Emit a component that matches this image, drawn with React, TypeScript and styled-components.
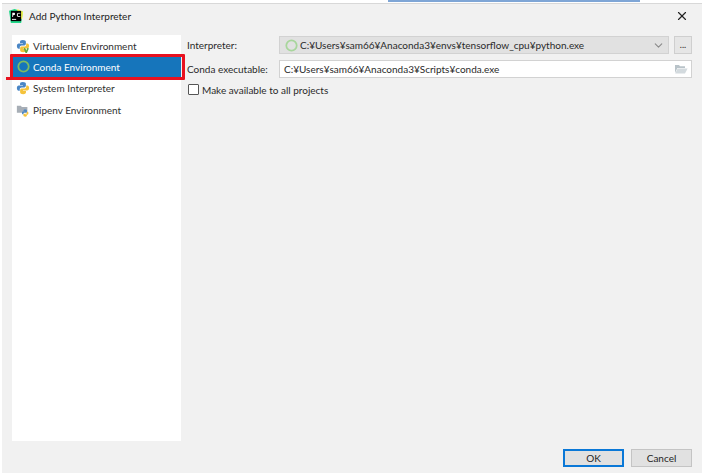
import styled, { createGlobalStyle } from "styled-components";
import { LuChevronDown, LuX } from "react-icons/lu";

const GlobalStyle = createGlobalStyle`
  html, body {
    margin: 0;
    padding: 0;
    background: #fff;
  }
  body {
    font-family: Lato, "Noto Sans", sans-serif;
    font-size: 10px;
    color: #2a2a2a;
  }
`;

const Page = styled.div`
  width: 702px;
  height: 475px;
  box-sizing: border-box;
  padding: 3px 0 2px 2px;
  overflow: hidden;
  position: relative;
`;

const TopEdge = styled.div`
  position: absolute;
  top: 0;
  left: 388px;
  width: 252px;
  height: 2px;
  background: #7fa6d6;
`;

const Dialog = styled.div`
  height: 100%;
  box-sizing: border-box;
  background: #f1f1f1;
  border-top: 1px solid #d8d8d8;
  display: flex;
  flex-direction: column;
`;

const TitleBar = styled.div`
  height: 23px;
  flex: none;
  display: flex;
  align-items: center;
  padding: 0 13px 0 7px;
  gap: 6px;
  color: #222;
`;

const Title = styled.span`
  flex: 1;
`;

const Close = styled.span`
  display: flex;
  color: #222;
  font-size: 14px;
`;

const Body = styled.div`
  flex: none;
  display: flex;
  margin-top: 8px;
  padding: 0 10px;
  gap: 6px;
`;

const Sidebar = styled.div`
  width: 169px;
  height: 406px;
  flex: none;
  background: #fff;
  box-sizing: border-box;
  display: flex;
  flex-direction: column;
`;

const NavRow = styled.div<{ $active?: boolean }>`
  height: 21.3px;
  display: flex;
  align-items: center;
  gap: 3px;
  padding-left: 4px;
  position: relative;
  background: ${(p) => (p.$active ? "#1675bb" : "transparent")};
  color: ${(p) => (p.$active ? "#fff" : "#2f2f2f")};
`;

const Highlight = styled.div`
  position: absolute;
  left: -2px;
  right: -4px;
  top: -2px;
  bottom: -2px;
  border: 3px solid #e8111f;
  border-radius: 1px;
`;

const HighlightTail = styled.div`
  position: absolute;
  left: -6px;
  bottom: -2px;
  width: 8px;
  height: 3px;
  background: #e8111f;
`;

const Form = styled.div`
  flex: 1;
  min-width: 0;
  padding-top: 1px;
  display: flex;
  flex-direction: column;
  gap: 6px;
`;

const FormRow = styled.div`
  display: flex;
  align-items: center;
  height: 18px;
  gap: 5px;
`;

const Label = styled.label`
  width: 87px;
  flex: none;
  white-space: nowrap;
`;

const Field = styled.div<{ $combo?: boolean }>`
  flex: 1;
  min-width: 0;
  height: 18px;
  box-sizing: border-box;
  display: flex;
  align-items: center;
  gap: ${(p) => (p.$combo ? "2px" : "3px")};
  padding: 0 3px 0 4px;
  background: ${(p) => (p.$combo ? "#e1e1e1" : "#fff")};
  border: 1px solid #d2d2d2;
  white-space: nowrap;
`;

const FieldText = styled.span`
  flex: 1;
`;

const Chevron = styled.span`
  display: flex;
  color: #8a8a8a;
  font-size: 13px;
`;

const Browse = styled.div`
  width: 18px;
  height: 18px;
  flex: none;
  box-sizing: border-box;
  background: #e6e6e6;
  border: 1px solid #cfcfcf;
  display: flex;
  align-items: center;
  justify-content: center;
  font-size: 9px;
  line-height: 1;
  padding-bottom: 1px;
`;

const CheckRow = styled.label`
  display: flex;
  align-items: center;
  gap: 3px;
  height: 13px;
  margin-top: -1px;
  padding-left: 1px;
`;

const CheckBox = styled.span`
  width: 11px;
  height: 11px;
  box-sizing: border-box;
  background: #fff;
  border: 1px solid #555;
  border-radius: 1px;
`;

const Footer = styled.div`
  flex: 1;
  display: flex;
  align-items: flex-start;
  justify-content: flex-end;
  gap: 7px;
  padding: 8px 10px 0 0;
`;

const Button = styled.button<{ $primary?: boolean }>`
  width: 61px;
  height: 18px;
  box-sizing: border-box;
  padding: 0;
  background: #e1e1e1;
  border: ${(p) => (p.$primary ? "2px solid #0a78d7" : "1.5px solid #c4c4c4")};
  font-family: inherit;
  font-size: 10px;
  color: #1f1f1f;
`;

const PythonIcon = ({ badge }: { badge?: boolean }) => (
  <svg width="14" height="14" viewBox="0 0 16 16">
    <path d="M7.8 1C5.2 1 4.6 2 4.6 3.2V4.6H8V5.2H3.2C1.8 5.2 1 6.2 1 8s.8 3 2.2 3h1.1V9.4c0-1.2 1-2.1 2.2-2.1h3c1 0 1.8-.8 1.8-1.8V3.2C11.3 1.8 10 1 7.8 1z" fill="#4a86c5" />
    <path d="M8.2 15c2.6 0 3.2-1 3.2-2.2v-1.4H8v-.6h4.8c1.4 0 2.2-1 2.2-2.8s-.8-3-2.2-3h-1.1v1.6c0 1.2-1 2.1-2.2 2.1h-3c-1 0-1.8.8-1.8 1.8v2.3C4.7 14.2 6 15 8.2 15z" fill="#f5c33b" />
    {badge && <path d="M9.5 10.5l2.2 5 2.2-5" fill="none" stroke="#62a83d" strokeWidth="1.8" />}
  </svg>
);

const CondaIcon = ({ color = "#7dbb62" }: { color?: string }) => (
  <svg width="13" height="13" viewBox="0 0 14 14" style={{ margin: "0 0.5px", flex: "none" }}>
    <circle cx="7" cy="7" r="5.6" fill="none" stroke={color} strokeWidth="1.9" />
  </svg>
);

const PipenvIcon = () => (
  <svg width="14" height="14" viewBox="0 0 16 16">
    <path d="M1 3h4.5l1.2 1.5H13V11H1z" fill="#a7aeb6" />
    <path d="M10.3 7.5c-1.3 0-1.7.6-1.7 1.2v.8h1.9v.3H8c-.8 0-1.2.6-1.2 1.6s.4 1.6 1.2 1.6h.6v-.9c0-.7.5-1.2 1.2-1.2h1.7c.6 0 1-.4 1-1V8.7c0-.8-.7-1.2-2.2-1.2z" fill="#4a86c5" />
    <path d="M10.7 15.6c1.3 0 1.7-.6 1.7-1.2v-.8h-1.9v-.3H13c.8 0 1.2-.6 1.2-1.6s-.4-1.6-1.2-1.6h-.6v.9c0 .7-.5 1.2-1.2 1.2H9.5c-.6 0-1 .4-1 1v1.2c0 .8.7 1.2 2.2 1.2z" fill="#f5c33b" />
  </svg>
);

const PyCharmIcon = () => (
  <svg width="14" height="14" viewBox="0 0 15 15">
    <path d="M0 2l6-2 9 3-2 12H2z" fill="#21d789" />
    <path d="M9 0l6 3-1 8-5-3z" fill="#fcf84a" />
    <rect x="2" y="2" width="11" height="11" fill="#000" />
    <rect x="3.2" y="10.6" width="4.5" height="1" fill="#fff" />
    <path d="M3.5 8.6V4h1.6c1 0 1.4.6 1.4 1.3S6 6.6 5 6.6H4.4v2zM10.8 8.7c-1.5 0-2.4-1-2.4-2.4S9.3 4 10.8 4c.7 0 1.2.2 1.5.5l-.5.7c-.3-.2-.6-.4-1-.4-.9 0-1.4.7-1.4 1.5s.5 1.5 1.4 1.5c.4 0 .7-.2 1-.4l.5.6c-.4.4-.9.7-1.5.7z" fill="#fff" />
  </svg>
);

const FolderIcon = () => (
  <svg width="14" height="12" viewBox="0 0 14 12">
    <path d="M1 2h4l1 1.2h5V5H3.4L1 10z" fill="#b9c3c9" />
    <path d="M3.6 5.4H13.6L11 10.6H1.2z" fill="#d3dade" />
  </svg>
);

const App = () => {
  return (
    <>
      <GlobalStyle />
      <Page>
        <TopEdge />
        <Dialog>
          <TitleBar>
            <PyCharmIcon />
            <Title>Add Python Interpreter</Title>
            <Close>
              <LuX />
            </Close>
          </TitleBar>
          <Body>
            <Sidebar>
              <NavRow>
                <PythonIcon badge />
                Virtualenv Environment
              </NavRow>
              <NavRow $active>
                <CondaIcon />
                Conda Environment
                <Highlight />
                <HighlightTail />
              </NavRow>
              <NavRow>
                <PythonIcon />
                System Interpreter
              </NavRow>
              <NavRow>
                <PipenvIcon />
                Pipenv Environment
              </NavRow>
            </Sidebar>
            <Form>
              <FormRow>
                <Label>Interpreter:</Label>
                <Field $combo>
                  <CondaIcon color="#a8d69c" />
                  <FieldText>C:¥Users¥sam66¥Anaconda3¥envs¥tensorflow_cpu¥python.exe</FieldText>
                  <Chevron>
                    <LuChevronDown />
                  </Chevron>
                </Field>
                <Browse>...</Browse>
              </FormRow>
              <FormRow>
                <Label>Conda executable:</Label>
                <Field>
                  <FieldText>C:¥Users¥sam66¥Anaconda3¥Scripts¥conda.exe</FieldText>
                  <FolderIcon />
                </Field>
              </FormRow>
              <CheckRow>
                <CheckBox />
                Make available to all projects
              </CheckRow>
            </Form>
          </Body>
          <Footer>
            <Button $primary>OK</Button>
            <Button>Cancel</Button>
          </Footer>
        </Dialog>
      </Page>
    </>
  );
};

export default App;
